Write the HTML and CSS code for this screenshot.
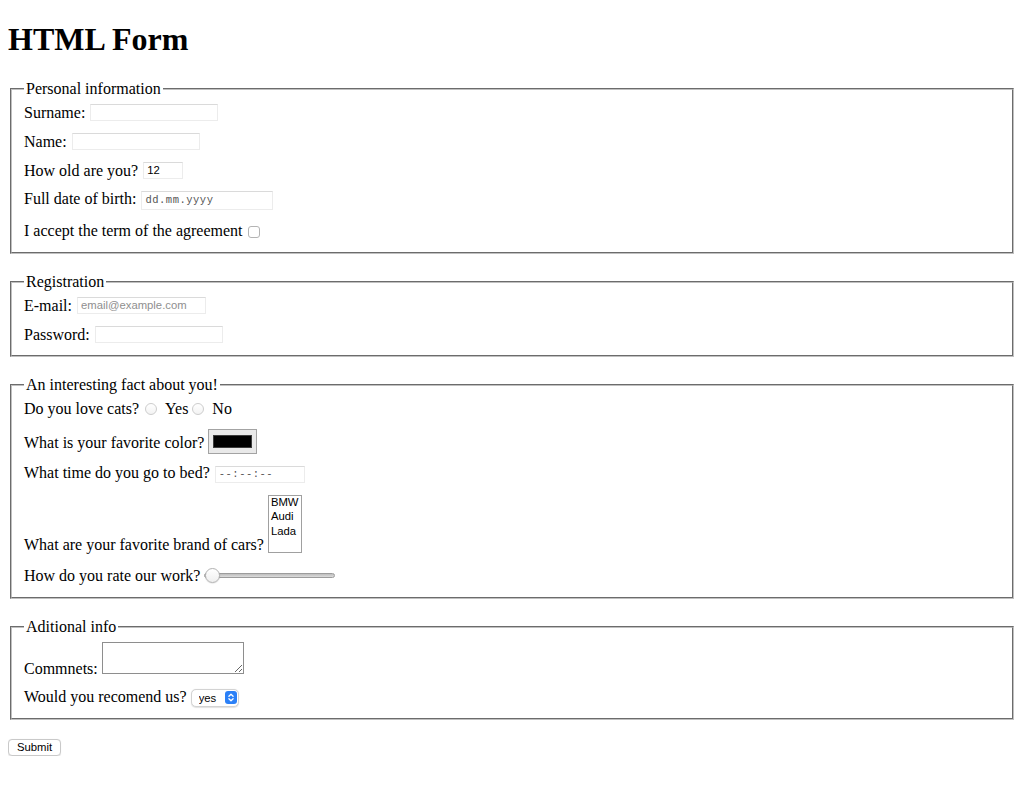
FILE: index.html
```html
<!DOCTYPE html>
<html lang="en">
<head>
<meta charset="utf-8">
<title>HTML Form</title>
<link rel="stylesheet" href="styles.css">
</head>
<body>
<h1 class="title">HTML Form</h1>
<form class="form" action="#">
  <fieldset class="group">
    <legend class="group-title">Personal information</legend>
    <div class="row">
      <label class="label" for="surname">Surname:</label>
      <input class="field w-128" id="surname" type="text">
    </div>
    <div class="row">
      <label class="label" for="name">Name:</label>
      <input class="field w-128" id="name" type="text">
    </div>
    <div class="row">
      <label class="label" for="age">How old are you?</label>
      <input class="field field-num w-40" id="age" type="number" value="12">
    </div>
    <div class="row row-tall">
      <label class="label label-high" for="birth">Full date of birth:</label>
      <input class="field field-mono field-date" id="birth" type="text" placeholder="dd.mm.yyyy">
    </div>
    <div class="row row-check">
      <label class="label" for="agree">I accept the term of the agreement</label>
      <input class="check" id="agree" type="checkbox">
    </div>
  </fieldset>

  <fieldset class="group">
    <legend class="group-title">Registration</legend>
    <div class="row">
      <label class="label" for="email">E-mail:</label>
      <input class="field w-129" id="email" type="email" placeholder="email@example.com">
    </div>
    <div class="row">
      <label class="label" for="password">Password:</label>
      <input class="field w-128" id="password" type="password">
    </div>
  </fieldset>

  <fieldset class="group">
    <legend class="group-title">An interesting fact about you!</legend>
    <div class="row">
      <span class="label">Do you love cats?</span>
      <input class="radio radio-first" id="cats-yes" type="radio" name="cats" value="yes">
      <label class="label option-label" for="cats-yes">Yes</label>
      <input class="radio" id="cats-no" type="radio" name="cats" value="no">
      <label class="label option-label" for="cats-no">No</label>
    </div>
    <div class="row">
      <label class="label label-low" for="color">What is your favorite color?</label>
      <input class="color" id="color" type="color" value="#000000">
    </div>
    <div class="row">
      <label class="label label-high" for="bedtime">What time do you go to bed?</label>
      <input class="field field-mono field-time" id="bedtime" type="text" placeholder="--:--:--">
    </div>
    <div class="row row-bottom">
      <label class="label" for="cars">What are your favorite brand of cars?</label>
      <select class="listbox" id="cars" multiple size="4">
        <option>BMW</option>
        <option>Audi</option>
        <option>Lada</option>
      </select>
    </div>
    <div class="row row-rate">
      <label class="label" for="rate">How do you rate our work?</label>
      <input class="range" id="rate" type="range" min="0" max="10" value="0">
    </div>
  </fieldset>

  <fieldset class="group">
    <legend class="group-title">Aditional info</legend>
    <div class="row row-bottom">
      <label class="label" for="comments">Commnets:</label>
      <textarea class="textarea" id="comments"></textarea>
    </div>
    <div class="row row-tight">
      <label class="label" for="recommend">Would you recomend us?</label>
      <span class="select-wrap">
        <select class="select" id="recommend">
          <option>yes</option>
          <option>no</option>
        </select>
        <svg class="stepper" width="12" height="13" viewBox="0 0 12 13" aria-hidden="true">
          <rect width="12" height="13" rx="3" fill="#2b80f7"/>
          <path d="M3.9 5.3 6 3.2 8.1 5.3M3.9 7.7 6 9.8 8.1 7.7" fill="none" stroke="#fff" stroke-width="1.3" stroke-linecap="round" stroke-linejoin="round"/>
        </svg>
      </span>
    </div>
  </fieldset>

  <div class="actions">
    <button class="submit" type="submit">Submit</button>
  </div>
</form>
</body>
</html>
```

FILE: styles.css
```css
* {
  box-sizing: border-box;
}

body {
  margin: 8px;
  background: #fff;
  color: #000;
  font-family: "Liberation Serif", "Times New Roman", serif;
  font-size: 16px;
}

.title {
  margin: 13.44px 0 21.44px;
  font-size: 32px;
  font-weight: bold;
  line-height: normal;
}

.form {
  margin: 0;
}

.group {
  margin: 0 2px;
  padding: 6px 12px 12px;
  border: 2px groove #c0c0c0;
  min-width: 0;
}

.group + .group {
  margin-top: 19px;
}

.group-title {
  padding: 0 2px;
  font-size: 16px;
  line-height: normal;
}

.row {
  display: flex;
  align-items: center;
  min-height: 17px;
}

.row + .row {
  margin-top: 12px;
}

.row-tall {
  min-height: 19px;
}

.row-check {
  min-height: 18px;
}

.row-bottom {
  align-items: flex-end;
}

.row + .row-rate {
  margin-top: 13px;
}

.row + .row-tight {
  margin-top: 11px;
}

.label {
  line-height: 17px;
  white-space: nowrap;
}

.label-low {
  position: relative;
  top: 1px;
}

.label-high {
  position: relative;
  top: -1.5px;
}

/* text-like fields */
.field {
  height: 17px;
  margin: 0 0 0 5px;
  padding: 0 3px;
  border: 1px solid #ececec;
  border-top-color: #dadada;
  border-radius: 0;
  background: #fff;
  color: #000;
  font-family: "Liberation Sans", Arial, sans-serif;
  font-size: 11.3px;
  outline: none;
}

.field::placeholder {
  color: #8f8f8f;
}

.w-128 { width: 128px; }
.w-129 { width: 129px; }
.w-40 { width: 40px; }

.field-num {
  -moz-appearance: textfield;
  appearance: textfield;
}

.field-num::-webkit-inner-spin-button,
.field-num::-webkit-outer-spin-button {
  -webkit-appearance: none;
  margin: 0;
}

.field-mono {
  font-family: "Liberation Mono", "Courier New", monospace;
  font-size: 10.5px;
  letter-spacing: 0.5px;
}

.field-mono::placeholder {
  color: #555;
}

.field-date {
  width: 132px;
  height: 19px;
  padding-left: 3px;
}

.field-time {
  width: 90px;
  padding-left: 3px;
}

/* checkbox & radio */
.check {
  -webkit-appearance: none;
  appearance: none;
  width: 12px;
  height: 12px;
  margin: 3px 0 0 5px;
  border: 1px solid #b4b4b4;
  border-radius: 3px;
  background: #fff;
}

.radio {
  -webkit-appearance: none;
  appearance: none;
  width: 12px;
  height: 12px;
  margin: 1px 0 0 4px;
  border: 1px solid #cdcdcd;
  border-radius: 50%;
  background: linear-gradient(#ffffff, #f3f3f3);
}

.radio-first {
  margin-left: 6px;
}

.option-label {
  margin-left: 8px;
}

/* colour well */
.color {
  -webkit-appearance: none;
  appearance: none;
  width: 49px;
  height: 25px;
  margin: 0 0 0 4px;
  padding: 0;
  border: 1px solid #a3a3a3;
  background: #e9e9e9;
}

.color::-webkit-color-swatch-wrapper {
  padding: 5px 4px;
}

.color::-webkit-color-swatch {
  border: 1px solid #3c3c3c;
  border-radius: 0;
}

/* list box */
.listbox {
  width: 34px;
  height: 58px;
  margin: 0 0 0 4px;
  padding: 0;
  border: 1px solid #a0a0a0;
  border-radius: 0;
  background: #fff;
  color: #000;
  font-family: "Liberation Sans", Arial, sans-serif;
  font-size: 11.3px;
  overflow: hidden;
  outline: none;
}

.listbox option {
  padding: 0 2px;
  line-height: 14.5px;
  min-height: 14.5px;
}

/* slider */
.range {
  -webkit-appearance: none;
  appearance: none;
  width: 131px;
  height: 19px;
  margin: 0 0 0 4px;
  padding: 0;
  background: transparent;
}

.range::-webkit-slider-runnable-track {
  height: 5px;
  border: 1px solid #9c9c9c;
  border-radius: 3px;
  background: linear-gradient(#bdbdbd, #dcdcdc);
}

.range::-webkit-slider-thumb {
  -webkit-appearance: none;
  appearance: none;
  width: 15px;
  height: 15px;
  margin-top: -6px;
  border: 1px solid #b2b2b2;
  border-radius: 50%;
  background: linear-gradient(#ffffff, #efefef);
  box-shadow: 0 0.5px 1px rgba(0, 0, 0, 0.15);
}

/* textarea */
.textarea {
  width: 142px;
  height: 32px;
  margin: 0 0 3px 4px;
  padding: 2px;
  border: 1px solid #8e8e8e;
  border-radius: 0;
  background: #fff;
  font-family: "Liberation Mono", monospace;
  font-size: 13px;
  resize: both;
}

/* popup select */
.select-wrap {
  position: relative;
  display: inline-block;
  margin-left: 4px;
  height: 18px;
}

.select {
  -webkit-appearance: none;
  appearance: none;
  width: 48px;
  height: 18px;
  margin: 0;
  padding: 0 0 0 7px;
  border: 1px solid #d3d3d3;
  border-radius: 5px;
  background: #fff;
  color: #000;
  font-family: "Liberation Sans", Arial, sans-serif;
  font-size: 11.3px;
  box-shadow: 0 0.5px 1px rgba(0, 0, 0, 0.12);
  outline: none;
}

.stepper {
  position: absolute;
  top: 3px;
  right: 2px;
  pointer-events: none;
}

/* submit */
.actions {
  margin-top: 19px;
}

.submit {
  display: block;
  height: 17px;
  margin: 0;
  padding: 0 8px;
  border: 1px solid #c9c9c9;
  border-radius: 4px;
  background: #fff;
  color: #000;
  font-family: "Liberation Sans", Arial, sans-serif;
  font-size: 11.3px;
  line-height: 15px;
  box-shadow: 0 0.5px 1px rgba(0, 0, 0, 0.1);
}
```
